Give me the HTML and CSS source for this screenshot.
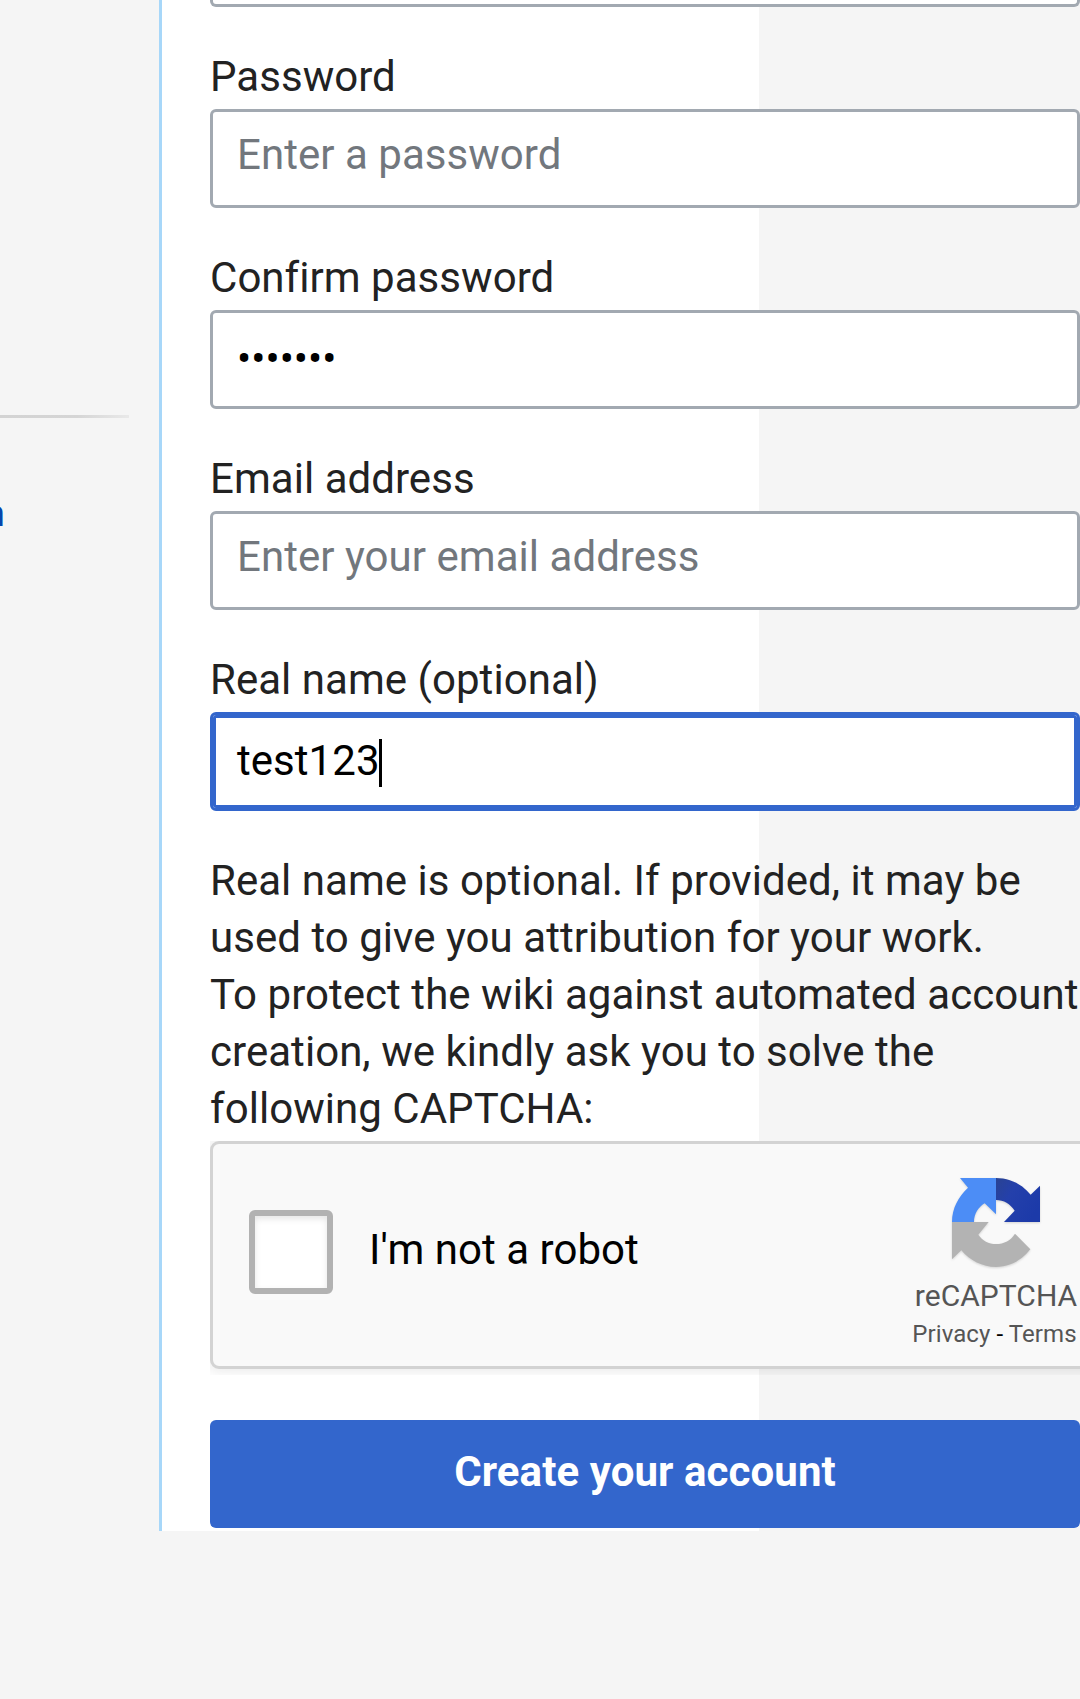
FILE: index.html
```html
<!DOCTYPE html>
<html lang="en">
<head>
<meta charset="utf-8">
<title>Create account</title>
<link rel="stylesheet" href="styles.css">
</head>
<body>
<div class="page">
  <aside class="sidebar">
    <div class="divider"></div>
    <a class="side-link">n</a>
  </aside>
  <main class="content">
    <form class="form">
      <div class="control control-cut"></div>
      <div class="field">
        <label>Password</label>
        <div class="control placeholder">Enter a password</div>
      </div>
      <div class="field">
        <label>Confirm password</label>
        <div class="control">•••••••</div>
      </div>
      <div class="field">
        <label>Email address</label>
        <div class="control placeholder">Enter your email address</div>
      </div>
      <div class="field">
        <label>Real name (optional)</label>
        <div class="control focused">test123<span class="caret"></span></div>
      </div>
      <p class="help">Real name is optional. If provided, it may be<br>used to give you attribution for your work.<br>To protect the wiki against automated account<br>creation, we kindly ask you to solve the<br>following CAPTCHA:</p>
      <div class="captcha-frame">
        <div class="captcha">
          <span class="checkbox"></span>
          <span class="captcha-label">I'm not a robot</span>
          <div class="brand">
            <svg class="logo" viewBox="150 138 276 282">
              <defs>
                <linearGradient id="dark" x1="0" y1="0" x2="1" y2="0.6">
                  <stop offset="0" stop-color="#2a4392"/><stop offset=".4" stop-color="#2440ab"/><stop offset="1" stop-color="#1c3aa9"/>
                </linearGradient>
              </defs>
              <path fill="#4c8df6" d="M180 144H288V253L254 220C235 232 222 252 222 276H156C156 235 175 200 204 173Z"/>
              <path fill="url(#dark)" d="M288 144C330 144 367 163 392 194L420 167V276H312L344 242C331 222 311 210 288 210Z"/>
              <path fill="#b3b3b3" d="M156 276H266L235 314C247 332 266 342 288 342C312 342 333 331 345 311L391 358C366 391 329 411 288 411C247 411 210 392 184 361L156 388Z"/>
            </svg>
            <div class="brand-name">reCAPTCHA</div>
            <div class="legal">Privacy <span class="dash">-</span> Terms</div>
          </div>
        </div>
      </div>
      <button class="submit" type="button">Create your account</button>
    </form>
  </main>
</div>
</body>
</html>
```
FILE: styles.css
```css
* { box-sizing: border-box; }
body {
  margin: 0;
  background: #f5f5f5;
  color: #222;
  font: 42px/57px Roboto, sans-serif;
  letter-spacing: .04px;
  overflow: hidden;
}
.page { display: flex; height: 1531px; }
.sidebar { width: 159px; flex: none; padding-top: 415px; }
.divider {
  width: 129px;
  height: 3px;
  background: linear-gradient(to right, #d3d3d3 0, #d5d5d5 60%, #e9e9e9 100%);
}
.side-link {
  display: flex;
  justify-content: flex-end;
  width: 5px;
  margin-top: 70px;
  overflow: hidden;
  color: #0645ad;
  font-size: 36px;
  line-height: 52px;
}
.content {
  width: 600px;
  flex: none;
  border-left: 3px solid #a7d7f9;
  background: #fff;
  padding-left: 48px;
}
.form { width: 870px; }
.field { margin-bottom: 41px; }
.field label { display: block; margin-bottom: 4px; }
.control {
  height: 99px;
  border: 3px solid #a2a9b1;
  border-radius: 6px;
  background: #fff;
  color: #000;
  padding: 17px 24px;
  white-space: nowrap;
}
.control-cut {
  height: 7px;
  margin-bottom: 41px;
  padding: 0;
  border-top: 0;
  border-radius: 0 0 6px 6px;
}
.placeholder { color: #72777d; padding-top: 14px; }
.focused {
  display: flex;
  border-color: #36c;
  box-shadow: inset 0 0 0 3px #36c;
}
.caret { width: 3px; height: 48px; margin: 7px 0 0 -1px; background: #000; }
.help { margin: 0 0 4px; white-space: nowrap; }
.captcha-frame { height: 234px; overflow: hidden; }
.captcha {
  display: flex;
  width: 912px;
  height: 228px;
  border: 3px solid #d3d3d3;
  border-radius: 9px;
  background: #f9f9f9;
  box-shadow: 0 0 12px 3px rgba(0, 0, 0, .08);
  color: #000;
}
.checkbox {
  width: 84px;
  height: 84px;
  flex: none;
  margin: 66px 0 0 36px;
  border: 6px solid #b2b2b2;
  border-radius: 6px;
  background: #fff;
  box-shadow: inset 0 3px 6px rgba(0, 0, 0, .1);
}
.captcha-label { margin: 77px 0 0 36px; white-space: nowrap; }
.brand {
  display: flex;
  flex-direction: column;
  align-items: center;
  width: 180px;
  margin: 32px 33px 0 auto;
  color: #555;
  white-space: nowrap;
}
.logo { display: block; width: 92px; height: 94px; filter: drop-shadow(0 1px 1px rgba(0, 0, 0, .15)); }
.brand-name { margin-top: 8px; font-size: 30px; line-height: 36px; }
.legal { margin-top: 5px; padding-right: 3px; font-size: 24px; line-height: 30px; letter-spacing: .08px; }
.dash { color: #000; }
.submit {
  display: block;
  width: 870px;
  height: 108px;
  margin-top: 45px;
  padding: 0 0 6px;
  border: 0;
  border-radius: 6px;
  background: #36c;
  color: #fff;
  font: 700 42px/57px Roboto, sans-serif;
  letter-spacing: .08px;
}
```
